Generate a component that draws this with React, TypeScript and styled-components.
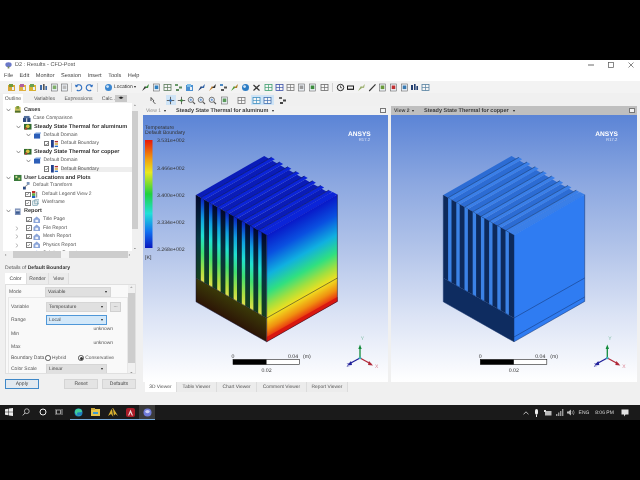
import React from "react";
import styled, { createGlobalStyle } from "styled-components";

const Global = createGlobalStyle`
  html, body { margin: 0; padding: 0; background: #000; }
  body { font-family: "Liberation Sans", Arial, sans-serif; text-rendering: geometricPrecision; }
`;

const Page = styled.div`
  width: 640px; height: 480px; background: #000; overflow: hidden;
  display: flex; flex-direction: column; padding-top: 60px; box-sizing: border-box;
`;
const Soft = styled.div`
  display: flex; flex-direction: column; filter: blur(0.5px);
`;
const Win = styled.div`
  height: 345px; background: #f0f0f0; display: flex; flex-direction: column; color: #3c3c3c;
  font-size: 5.6px; overflow: hidden;
`;
const TitleBar = styled.div`
  height: 10px; background: #fff; display: flex; align-items: center; padding: 0 0 0 5px; gap: 3px; color: #555;
`;
const Spacer = styled.div`flex: 1;`;
const WinControls = styled.div`display: flex; align-items: center; gap: 14px; padding-right: 6px;`;
const MenuBar = styled.div`
  height: 11px; background: #fff; display: flex; align-items: center; padding-left: 4px; gap: 6.6px; color: #444;
`;
const Tool1 = styled.div`
  height: 12px; background: #f3f3f3; display: flex; align-items: center; padding-left: 6px; flex: none;
`;
const ToolSlot = styled.div<{ $w?: number; $hl?: boolean }>`
  width: ${p => p.$w ?? 10.7}px; height: 10px; display: flex; align-items: center; justify-content: center; flex: none;
  background: ${p => (p.$hl ? "#cfe4f6" : "transparent")};
`;
const Sep = styled.div<{ $w: number }>`
  width: ${p => p.$w}px; height: 9px; flex: none; display: flex; justify-content: center;
  &::after { content: ""; width: 1px; height: 100%; background: #d2d2d2; }
`;
const LocationBtn = styled.div`
  width: 36px; display: flex; align-items: center; gap: 1.5px; flex: none; font-size: 5px; color: #333; margin-left: 3px;
`;
const Caret = styled.span`
  width: 0; height: 0; border-left: 1.7px solid transparent; border-right: 1.7px solid transparent;
  border-top: 2.2px solid #222; display: inline-block; flex: none;
`;
const Body = styled.div`flex: 1; display: flex; min-height: 0;`;

const Left = styled.div`
  width: 141px; flex: none; display: flex; flex-direction: column; padding-top: 1px; box-sizing: border-box;
`;
const TabRow = styled.div`
  height: 9px; display: flex; padding-left: 3px; align-items: stretch; position: relative; flex: none;
`;
const TopTab = styled.div<{ $active?: boolean; $w: number }>`
  width: ${p => p.$w}px; display: flex; align-items: center; justify-content: center; flex: none;
  background: ${p => (p.$active ? "#fff" : "transparent")}; font-size: 5.2px; color: #555;
`;
const TabArrows = styled.div`
  position: absolute; left: 115px; top: 1px; width: 12px; height: 7px; background: #c8c8c8;
  font-size: 5px; line-height: 7px; text-align: center; color: #222;
`;
const TreeBox = styled.div`
  margin: 0 3px 0 3px; height: 155px; background: #fff; position: relative; overflow: hidden; flex: none;
  padding-top: 2.8px; box-sizing: border-box;
`;
const Row = styled.div<{ $x: number }>`
  height: 8.45px; display: flex; align-items: center; padding-left: ${p => p.$x}px; white-space: nowrap;
  font-size: 5.1px; color: #505050;
`;
const Label = styled.span<{ $bold?: boolean; $sel?: boolean }>`
  font-weight: ${p => (p.$bold ? 700 : 400)}; color: ${p => (p.$bold ? "#333" : "#555")};
  font-size: ${p => (p.$bold ? 5.55 : 4.95)}px; margin-left: 2.5px;
  flex: ${p => (p.$sel ? 1 : "none")}; background: ${p => (p.$sel ? "#eeeeee" : "transparent")};
`;
const Chev = styled.span`
  width: 11px; height: 8px; display: flex; align-items: center; justify-content: center; flex: none;
`;
const Check = styled.span`
  width: 5.4px; height: 5.4px; border: 0.7px solid #7a7a7a; background: #fff; flex: none; margin-right: 1.4px;
  display: flex; align-items: center; justify-content: center; box-sizing: border-box;
`;
const VScroll = styled.div<{ $top: number; $h: number; $right: number; $thumbH: number; $thumbTop: number }>`
  position: absolute; right: ${p => p.$right}px; top: ${p => p.$top}px; width: 6.5px; height: ${p => p.$h}px;
  background: #f0f0f0; display: flex; flex-direction: column; align-items: center;
  &::before { content: ""; position: absolute; top: ${p => p.$thumbTop}px; left: 0; right: 0; height: ${p => p.$thumbH}px; background: #cdcdcd; }
`;
const HScroll = styled.div`
  position: absolute; left: 0; right: 0; bottom: 0; height: 7px; background: #f0f0f0;
  &::before { content: ""; position: absolute; left: 10px; width: 115px; top: 0; bottom: 0; background: #cdcdcd; }
  &::after { content: ""; position: absolute; left: 58px; width: 8px; top: 0; bottom: 0; background: #f4f4f4; }
`;
const Arrow = styled.span<{ $pos: string }>`
  position: absolute; ${p => p.$pos}; font-size: 4.5px; line-height: 5px; color: #444; z-index: 1;
`;
const DetailsTitle = styled.div`
  height: 12px; padding: 4px 0 0 5px; box-sizing: border-box; font-size: 5.1px; color: #555; flex: none; margin-top: 3px;
  b { color: #333; }
`;
const DetailTabs = styled.div`
  height: 11px; display: flex; padding-left: 5px; align-items: stretch; flex: none; margin-top: 0;
`;
const DTab = styled.div<{ $active?: boolean; $w: number }>`
  width: ${p => p.$w}px; display: flex; align-items: center; justify-content: center;
  background: ${p => (p.$active ? "#fff" : "#ececec")}; border-right: 0.5px solid #dedede; box-sizing: border-box;
  font-size: 5px; color: #444;
`;
const DetailBox = styled.div`
  margin: 0 5px 0 5px; height: 90px; background: #f9f9f9; border: 0.5px solid #e0e0e0; position: relative;
  overflow: hidden; flex: none; box-sizing: border-box;
`;
const ModeRow = styled.div`
  display: flex; align-items: center; height: 10px; margin-top: 2px; padding-left: 3px;
`;
const FieldLabel = styled.span<{ $w: number }>`
  width: ${p => p.$w}px; flex: none; font-size: 5px; color: #555;
`;
const Combo = styled.div<{ $w: number; $focus?: boolean }>`
  width: ${p => p.$w}px; height: 9.5px; box-sizing: border-box; display: flex; align-items: center; justify-content: space-between;
  padding: 0 3px 0 2px; font-size: 4.9px; color: #444; flex: none;
  background: ${p => (p.$focus ? "#d3e8f9" : "#e0e0e0")};
  border: ${p => (p.$focus ? "0.7px solid #4f97d8" : "0.5px solid #d6d6d6")};
`;
const Group = styled.div`
  margin: 0 7px 0 2px; border: 0.5px solid #e8e8e8; padding: 2.5px 0 0 2px; height: 84px; box-sizing: border-box;
  display: flex; flex-direction: column;
`;
const FRow = styled.div<{ $h: number }>`
  height: ${p => p.$h}px; display: flex; align-items: center; flex: none; position: relative;
`;
const MoreBtn = styled.div`
  width: 11px; height: 10px; margin-left: 3px; background: #e3e3e3; border: 0.5px solid #d0d0d0; box-sizing: border-box;
  font-size: 5px; line-height: 7px; text-align: center; color: #444;
`;
const Unknown = styled.span`
  position: absolute; right: 14px; top: 0; font-size: 4.9px; color: #555;
`;
const Radio = styled.span<{ $on?: boolean; $ml: number }>`
  width: 5.6px; height: 5.6px; border: 0.6px solid #555; border-radius: 50%; box-sizing: border-box; margin-left: ${p => p.$ml}px;
  background: #fff; flex: none; display: flex; align-items: center; justify-content: center;
  &::after { content: ""; width: 3px; height: 3px; border-radius: 50%; background: ${p => (p.$on ? "#333" : "transparent")}; }
`;
const RadioText = styled.span`font-size: 4.9px; margin-left: 1.5px; color: #555;`;
const Buttons = styled.div`
  display: flex; padding: 5px 0 0 5px; align-items: center; flex: none;
`;
const Btn = styled.div<{ $primary?: boolean; $ml?: number }>`
  width: 34px; height: 10px; box-sizing: border-box; display: flex; align-items: center; justify-content: center;
  font-size: 5px; color: #444; margin-left: ${p => p.$ml ?? 0}px;
  background: ${p => (p.$primary ? "#e2e9f0" : "#e4e4e4")};
  border: ${p => (p.$primary ? "1px solid #3f88c8" : "0.5px solid #d4d4d4")};
`;

const Right = styled.div`
  flex: 1; display: flex; flex-direction: column; padding-left: 2px; min-width: 0;
`;
const Tool2 = styled.div`
  height: 12px; margin-top: 1px; display: flex; align-items: center; padding-left: 5px; flex: none;
`;
const Views = styled.div`
  display: flex; gap: 3px; height: 276px; flex: none; margin-top: 0; padding-right: 3px;
`;
const View = styled.div<{ $w: number }>`
  width: ${p => p.$w}px; display: flex; flex-direction: column; flex: none;
`;
const ViewHeader = styled.div<{ $active?: boolean }>`
  height: 9px; display: flex; align-items: center; flex: none; padding: 0 2px 0 3px; box-sizing: border-box;
  background: ${p => (p.$active ? "#bfbfbf" : "#f1f1f1")}; color: #444; font-size: 5px; white-space: nowrap;
`;
const ViewName = styled.span<{ $active?: boolean }>`
  width: 18px; flex: none; color: ${p => (p.$active ? "#444" : "#888")}; font-weight: ${p => (p.$active ? 700 : 400)};
`;
const ViewCaret = styled.span`width: 12px; flex: none; display: flex; align-items: center;`;
const ViewTitle = styled.span`font-weight: 700; margin-right: 4px; color: #3d3d3d; font-size: 5.5px;`;
const Maximize = styled.span`
  width: 6px; height: 5px; border: 0.6px solid #777; border-top-width: 1.2px; box-sizing: border-box; background: #f4f4f4;
`;
const Canvas = styled.div`
  height: 267px; flex: none;
  background: linear-gradient(#5b84d6 0%, #8ba7e0 25%, #b5c6ea 52%, #dbe3f5 75%, #ffffff 100%);
  svg { display: block; }
`;
const ViewerTabs = styled.div`
  height: 10px; display: flex; align-items: stretch; padding-left: 2px; flex: none;
`;
const ViewerTab = styled.div<{ $active?: boolean; $w: number }>`
  width: ${p => p.$w}px; display: flex; align-items: center; justify-content: center; font-size: 4.9px; color: #555; flex: none;
  background: ${p => (p.$active ? "#fff" : "#ececec")}; border-right: 0.5px solid #dcdcdc; box-sizing: border-box;
`;

const Taskbar = styled.div`
  height: 15px; background: #1a1a1a; display: flex; align-items: center; color: #d8d8d8; font-size: 5px;
`;
const TaskSlot = styled.div<{ $w: number; $active?: boolean; $under?: boolean }>`
  width: ${p => p.$w}px; height: 15px; display: flex; align-items: center; justify-content: center; flex: none; box-sizing: border-box;
  background: ${p => (p.$active ? "#3a3a3a" : "transparent")};
  border-bottom: ${p => (p.$under ? "1px solid #76a9d8" : "1px solid transparent")};
`;
const Tray = styled.div`display: flex; align-items: center; gap: 0; padding-right: 8px; height: 15px;`;
const TrayItem = styled.div<{ $w: number }>`
  width: ${p => p.$w}px; display: flex; align-items: center; justify-content: center; flex: none; white-space: nowrap;
`;

type IconKind = "box" | "disc" | "bars" | "undo" | "redo" | "grid" | "cross" | "hand" | "zoom" | "page" | "fan" | "clock" | "wire" | "line" | "tree" | "move";

const ToolIcon = ({ k, a = "#3b78c4", b = "#e6b33c" }: { k: IconKind; a?: string; b?: string }) => {
  const s = { width: 9, height: 9, viewBox: "0 0 9 9" };
  switch (k) {
    case "box":
      return <svg {...s}><rect x="1" y="2" width="7" height="6" fill={a} /><rect x="2" y="1" width="4" height="3" fill={b} /><rect x="5" y="4" width="2" height="3" fill="#e8eef6" /></svg>;
    case "disc":
      return <svg {...s}><circle cx="4.5" cy="4.5" r="3.5" fill={a} /><circle cx="3.6" cy="3.6" r="1.4" fill="#cfe4f7" /></svg>;
    case "bars":
      return <svg {...s}><rect x="1" y="2" width="2" height="5" fill={a} /><rect x="4" y="1" width="1.6" height="6" fill={b} /><rect x="6.4" y="3" width="1.6" height="4" fill={a} /></svg>;
    case "undo":
      return <svg {...s} fill="none"><path d="M2 3.5 A3 3 0 1 1 2.8 7" stroke={a} strokeWidth="1.1" /><path d="M0.8 1.5 L2 4.4 L4.2 3 Z" fill={a} /></svg>;
    case "redo":
      return <svg {...s} fill="none"><path d="M7 3.5 A3 3 0 1 0 6.2 7" stroke={a} strokeWidth="1.1" /><path d="M8.2 1.5 L7 4.4 L4.8 3 Z" fill={a} /></svg>;
    case "grid":
      return <svg {...s} fill="none"><rect x="1" y="1.5" width="7" height="6" fill="#f6f6f6" stroke={a} strokeWidth=".8" /><path d="M1 4.5H8M4.5 1.5V7.5" stroke={a} strokeWidth=".7" /></svg>;
    case "cross":
      return <svg {...s} fill="none"><path d="M1.5 2 L7.5 7.5 M7.5 2 L1.5 7.5" stroke="#333" strokeWidth="1.2" /><circle cx="4.5" cy="4.7" r="1" fill={a} /></svg>;
    case "hand":
      return <svg {...s} fill="none"><path d="M2 1.5 L5 5 L4 5.5 L6.5 8 M2 1.5 L2 5" stroke="#333" strokeWidth=".8" /></svg>;
    case "move":
      return <svg {...s} fill="none"><path d="M4.5 .8V8.2M.8 4.5H8.2" stroke="#555" strokeWidth=".9" /><circle cx="4.5" cy="4.5" r="1.2" fill={a} /></svg>;
    case "zoom":
      return <svg {...s} fill="none"><circle cx="3.8" cy="3.8" r="2.6" stroke="#555" strokeWidth=".8" fill="#eef3f8" /><path d="M5.8 5.8 L8 8" stroke="#555" strokeWidth="1.1" /><path d="M2.6 3.8H5M3.8 2.6V5" stroke={a} strokeWidth=".6" /></svg>;
    case "page":
      return <svg {...s}><rect x="1.5" y="1" width="6" height="7" fill="#eef3f8" stroke="#666" strokeWidth=".6" /><rect x="2.7" y="2.5" width="3.6" height="3.6" fill={a} /></svg>;
    case "fan":
      return <svg {...s}><path d="M1 8 L4 3 L5.5 4.5 Z" fill={a} /><path d="M4 5 L8 1 L7 5 Z" fill={b} /></svg>;
    case "clock":
      return <svg {...s} fill="none"><circle cx="4.5" cy="4.5" r="3.2" stroke="#222" strokeWidth="1" /><path d="M4.5 2.5V4.7H6" stroke="#222" strokeWidth=".7" /></svg>;
    case "wire":
      return <svg {...s}><rect x="1" y="2.5" width="7" height="4.4" fill="#1c1c1c" /><rect x="2" y="3.5" width="5" height="2.2" fill="#f3f3f3" /></svg>;
    case "line":
      return <svg {...s} fill="none"><path d="M1.2 8 L7.5 1.4" stroke="#333" strokeWidth="1.1" /></svg>;
    case "tree":
      return <svg {...s}><rect x="1" y="1" width="3" height="2" fill={b} /><rect x="5" y="3.5" width="3" height="2" fill={a} /><rect x="2" y="6" width="3" height="2" fill={a} /></svg>;
  }
};

type TI = [IconKind, string?, string?];
const toolStart: TI[] = [["box", "#d9a637", "#6f9a3a"], ["box", "#e0b040", "#b060a0"], ["box", "#d8b030", "#6aa050"], ["bars", "#3c6aa8", "#555"], ["page", "#7fae6a"], ["page", "#bbb"]];
const toolUndo: TI[] = [["undo", "#2f6fc0"], ["redo", "#2f6fc0"]];
const toolMid: TI[] = [
  ["fan", "#333", "#3a8a3a"], ["page", "#2f80c0"], ["grid", "#5a7a5a"], ["tree", "#5c8a5c", "#6a9a6a"], ["box", "#4a8fd0", "#7fbde8"], ["fan", "#203c70", "#3366aa"], ["fan", "#c08030", "#333"],
  ["tree", "#555", "#4d8ac4"], ["fan", "#4a9a3a", "#b0802a"], ["disc", "#2c7cc4"], ["cross", "#444"], ["grid", "#3f9f6f"], ["grid", "#3a50a8"], ["grid", "#777"], ["page", "#999"], ["page", "#3c8c3c"],
];
const toolEnd: TI[] = [["clock"], ["wire"], ["fan", "#8fa860", "#a8b880"], ["line"], ["page", "#6a9a3a"], ["page", "#c03030"], ["page", "#3a7ab0"], ["bars", "#233f70", "#233f70"], ["grid", "#5580a0"]];

const tool2: Array<{ k?: IconKind; a?: string; b?: string; w: number; hl?: boolean }> = [
  { k: "hand", a: "#333", w: 10 },
  { w: 7.6 },
  { k: "move", a: "#2f6fc0", w: 10.7, hl: true },
  { k: "move", a: "#3a8a3a", w: 10 },
  { k: "zoom", a: "#2f6fc0", w: 10.4 },
  { k: "zoom", a: "#2f6fc0", w: 10.4 },
  { k: "zoom", a: "#2f6fc0", w: 10.4 },
  { k: "page", a: "#5a9a5a", w: 14 },
  { k: "grid", a: "#777", w: 20 },
  { k: "grid", a: "#3f8fc0", w: 10, hl: true },
  { k: "grid", a: "#3f6fb0", w: 13, hl: true },
  { k: "tree", a: "#444", b: "#666", w: 17 },
];

const sinkPts = (arr: number[][]) => arr.map(p => p.join(",")).join(" ");
const HeatSink = ({ id, copper }: { id: string; copper?: boolean }) => {
  const dx = 8.2, dy = 4.686, bx = 70.7, by = -40.4;
  const cells = Array.from({ length: 9 }, (_, i) => i);
  const lineC = copper ? "#12306a" : "#101030";
  const topFin = copper ? "#3a7fe8" : "#0b24d8";
  const topGap = copper ? "#2c6cd4" : "#0a1cb8";
  const seam = copper ? "#16407f" : "#050f60";
  return (
    <>
      <defs>
        <linearGradient id={`${id}r`} gradientUnits="userSpaceOnUse" x1="266.7" y1="235" x2="311.9" y2="314.1">
          <stop offset="0" stopColor="#0818c8" /><stop offset=".19" stopColor="#0a50e0" /><stop offset=".38" stopColor="#10b0e0" />
          <stop offset=".55" stopColor="#30e080" /><stop offset=".68" stopColor="#a0e040" /><stop offset=".79" stopColor="#f0e020" />
          <stop offset=".9" stopColor="#f09010" /><stop offset="1" stopColor="#e82010" />
        </linearGradient>
        <linearGradient id={`${id}s`} gradientUnits="userSpaceOnUse" x1="196" y1="195" x2="159.8" y2="258.3">
          <stop offset="0" stopColor="#0a20c0" /><stop offset=".24" stopColor="#10a0e0" /><stop offset=".44" stopColor="#20e0d0" />
          <stop offset=".65" stopColor="#40e070" /><stop offset=".87" stopColor="#b0e040" /><stop offset="1" stopColor="#e8e050" />
        </linearGradient>
        <linearGradient id={`${id}d`} gradientUnits="userSpaceOnUse" x1="196" y1="195" x2="159.8" y2="258.3">
          <stop offset="0" stopColor="#02082c" /><stop offset=".5" stopColor="#053440" /><stop offset="1" stopColor="#15401c" />
        </linearGradient>
        <linearGradient id={`${id}b`} gradientUnits="userSpaceOnUse" x1="196" y1="278" x2="185.7" y2="296.1">
          <stop offset="0" stopColor="#3a3a08" /><stop offset="1" stopColor="#2c1406" />
        </linearGradient>
      </defs>
      {cells.map(i => {
        const x = 196 + dx * i, y = 195 + dy * i;
        const g0 = [x, y], g1 = [x + 4.8, y + 2.74];
        const f1 = [x + 8.2, y + 4.686];
        const back = (p: number[], t = 1) => [p[0] + bx * t, p[1] + by * t];
        return (
          <g key={`t${i}`}>
            <polygon points={sinkPts([g0, g1, back(g1, 0.965), back(g0, 0.965)])} fill={topGap} />
            {i < 8 && <polygon points={sinkPts([g1, f1, back(f1), back(g1)])} fill={topFin} />}
            {i < 8 && <path d={`M${g1[0]} ${g1[1]} L${back(g1)[0]} ${back(g1)[1]}`} stroke={seam} strokeWidth=".7" />}
          </g>
        );
      })}
      <polygon points="261.9,232.3 266.7,235 337.4,194.6 332.6,191.9" fill={topFin} />
      <polygon points="196,195 266.7,235 266.7,318 196,278" fill={copper ? "#0d2a5c" : `url(#${id}d)`} />
      <polygon points="196,278 266.7,318 266.7,341.8 196,301.8" fill={copper ? "#0e2c60" : `url(#${id}b)`} />
      {cells.slice(0, 8).map(i => {
        const x = 196 + dx * i + 4.8, y = 195 + dy * i + 2.74;
        return <polygon key={`s${i}`} points={sinkPts([[x, y], [x + 3.4, y + 1.95], [x + 3.4, y + 84.95], [x, y + 83]])} fill={copper ? "#3b82e6" : `url(#${id}s)`} />;
      })}
      <polygon points="266.7,235 337.4,194.6 337.4,301.4 266.7,341.8" fill={copper ? "#2f7cf2" : `url(#${id}r)`} />
      {!copper && <polygon points="266.7,337 337.4,297 337.4,301.4 266.7,341.8" fill="#d81810" />}
      <path d="M196 278 L266.7 318 L337.4 278" stroke={lineC} strokeWidth=".5" fill="none" />
      {copper && <path d="M266.7 337 L337.4 297" stroke={lineC} strokeWidth=".5" fill="none" />}
      <path d="M266.7 235 V341.8 M196 195 V301.8 L266.7 341.8 L337.4 301.4 V194.6" stroke={lineC} strokeWidth=".5" fill="none" />
    </>
  );
};

const SvgText = styled.text<{ $c?: string; $s?: number; $b?: boolean }>`
  font-family: "Liberation Sans", Arial, sans-serif; font-size: ${p => p.$s ?? 5}px; fill: ${p => p.$c ?? "#333"};
  font-weight: ${p => (p.$b ? 700 : 400)};
`;

const Overlays = () => (
  <>
    <SvgText x="348" y="136" $s={6.6} $b $c="#fff">ANSYS</SvgText>
    <SvgText x="370" y="141" $s={4.2} $c="#dfe7f8" textAnchor="end">R17.2</SvgText>
    <SvgText x="233" y="357.5" $s={5.2} textAnchor="middle">0</SvgText>
    <SvgText x="293" y="357.5" $s={5.2} textAnchor="middle">0.04</SvgText>
    <SvgText x="303" y="357.5" $s={5.2}>(m)</SvgText>
    <SvgText x="266.5" y="371.5" $s={5.2} textAnchor="middle">0.02</SvgText>
    <rect x="233" y="359.5" width="66.5" height="5" fill="#fff" stroke="#222" strokeWidth=".6" />
    <rect x="233" y="359.5" width="33.5" height="5" fill="#000" />
    <path d="M360 358 V347" stroke="#128a3a" strokeWidth="1.3" />
    <path d="M358.3 349 L360 344.5 L361.7 349 Z" fill="#128a3a" />
    <path d="M360 358 L371 364" stroke="#b02838" strokeWidth="1.3" />
    <path d="M369 361 L373 365.5 L368 365 Z" fill="#b02838" />
    <path d="M360 358 L349 364" stroke="#20209a" strokeWidth="1.3" />
    <path d="M351 361 L347 365.5 L352 365 Z" fill="#20209a" />
    <circle cx="360" cy="358" r="1.3" fill="#38b0b8" />
    <SvgText x="362.5" y="340" $s={5} $c="#7ab8a0" textAnchor="middle">Y</SvgText>
    <SvgText x="375" y="367.5" $s={5} $c="#d88090">X</SvgText>
    <SvgText x="346.5" y="367" $s={5} $c="#5050b0">Z</SvgText>
  </>
);

const Legend = () => (
  <>
    <defs>
      <linearGradient id="lg" x1="0" y1="0" x2="0" y2="1">
        <stop offset="0" stopColor="#e81808" /><stop offset=".18" stopColor="#f0a010" /><stop offset=".3" stopColor="#e8e820" />
        <stop offset=".5" stopColor="#20d040" /><stop offset=".68" stopColor="#20e0d8" /><stop offset=".85" stopColor="#1070f0" /><stop offset="1" stopColor="#0818c0" />
      </linearGradient>
    </defs>
    <SvgText x="145" y="129" $s={5.2}>Temperature</SvgText>
    <SvgText x="145" y="134" $s={5.2}>Default Boundary</SvgText>
    <rect x="145" y="140" width="7.5" height="108" fill="url(#lg)" />
    {[["3.531e+002", 142], ["3.466e+002", 169.5], ["3.400e+002", 197], ["3.334e+002", 224], ["3.268e+002", 251]].map(([t, y]) => (
      <SvgText key={t as string} x="157" y={y as number} $s={5.2}>{t}</SvgText>
    ))}
    <SvgText x="145" y="259" $s={5.2}>[K]</SvgText>
  </>
);

const ChevronD = () => <svg width="5" height="4" viewBox="0 0 5 4"><path d="M.6 .8 L2.5 3 L4.4 .8" fill="none" stroke="#666" strokeWidth=".7" /></svg>;
const ChevronR = () => <svg width="4" height="5" viewBox="0 0 4 5"><path d="M.8 .6 L3 2.5 L.8 4.4" fill="none" stroke="#999" strokeWidth=".7" /></svg>;
const Tick = () => <svg width="4" height="4" viewBox="0 0 4 4"><path d="M.6 2 L1.6 3.2 L3.4 .7" fill="none" stroke="#555" strokeWidth=".7" /></svg>;

type TK = "cases" | "study" | "compare" | "domain" | "boundary" | "transform" | "legend" | "wire" | "report" | "doc" | "loc";
const TreeIcon = ({ k }: { k: TK }) => {
  const s = { width: 7.5, height: 7.5, viewBox: "0 0 8 8", style: { flex: "none" as const } };
  switch (k) {
    case "cases": return <svg {...s}><rect x="1" y="1" width="6" height="6" fill="#c8c060" /><rect x="2.5" y="0" width="3" height="3" fill="#7c9a3a" /><rect x="1" y="5" width="6" height="2" fill="#50702c" /></svg>;
    case "study": return <svg {...s}><rect x="0" y="1" width="8" height="6" fill="#2e6a2e" /><circle cx="4" cy="3.5" r="2" fill="#d8c040" /><rect x="1" y="5" width="2.5" height="2" fill="#b04030" /></svg>;
    case "loc": return <svg {...s}><rect x="0" y="1" width="8" height="6.5" fill="#3a7a3a" /><rect x="1.5" y="2" width="2" height="2" fill="#d8e0a0" /><rect x="4.5" y="4" width="2" height="2" fill="#c8d070" /></svg>;
    case "compare": return <svg {...s}><rect x="0" y="3" width="3.5" height="4.5" fill="#2c4a80" /><rect x="4.5" y="3" width="3.5" height="4.5" fill="#2c4a80" /><rect x="1" y="1" width="6" height="2.5" fill="#53709e" /></svg>;
    case "domain": return <svg {...s}><rect x="0" y="2" width="6.5" height="5" fill="#2d5fb8" /><path d="M0 2 L2 .6 H8 L6.5 2 Z" fill="#78a0dc" /></svg>;
    case "boundary": return <svg {...s}><rect x="0" y="0" width="3" height="8" fill="#22408c" /><rect x="4" y="1" width="4" height="1.5" fill="#b03030" /><rect x="4" y="3.5" width="4" height="1.5" fill="#d0a030" /><rect x="4" y="6" width="4" height="1.5" fill="#3070c0" /></svg>;
    case "transform": return <svg {...s}><rect x="4" y="0" width="3" height="3" fill="#7a94b8" /><rect x="0" y="5" width="3" height="3" fill="#2c4a80" /><path d="M2 5 L5 3" stroke="#555" strokeWidth=".7" /></svg>;
    case "legend": return <svg {...s}><rect x="0" y="0" width="3.5" height="2.6" fill="#c03028" /><rect x="0" y="2.6" width="3.5" height="2.6" fill="#60b040" /><rect x="0" y="5.2" width="3.5" height="2.8" fill="#2060c0" /><path d="M5 1V7" stroke="#555" strokeWidth=".8" /></svg>;
    case "wire": return <svg {...s}><rect x=".8" y="2" width="5" height="5" fill="#e8eef0" stroke="#5f8f9f" strokeWidth=".6" /><rect x="3" y=".8" width="4.4" height="4.4" fill="none" stroke="#5f8f9f" strokeWidth=".6" /></svg>;
    case "report": return <svg {...s}><rect x="1" y="0.5" width="6" height="7" fill="#7c90b8" /><rect x="2" y="2" width="4" height="1" fill="#e0e6f0" /><rect x="2" y="4" width="4" height="2" fill="#3c5c90" /></svg>;
    case "doc": return <svg {...s}><path d="M4 .5 L7.5 3.5 V7.5 H.5 V3.5 Z" fill="#8aa4d8" /><rect x="2.5" y="4" width="3" height="2.5" fill="#eef2fa" /></svg>;
  }
};

type RowDef = { x: number; chev?: "d" | "r"; check?: boolean; icon?: TK; text: string; bold?: boolean; sel?: boolean };
const rows: RowDef[] = [
  { x: 0, chev: "d", icon: "cases", text: "Cases", bold: true },
  { x: 20, icon: "compare", text: "Case Comparison" },
  { x: 10, chev: "d", icon: "study", text: "Steady State Thermal for aluminum", bold: true },
  { x: 19.5, chev: "d", icon: "domain", text: "Default Domain" },
  { x: 41, check: true, icon: "boundary", text: "Default Boundary" },
  { x: 10, chev: "d", icon: "study", text: "Steady State Thermal for copper", bold: true },
  { x: 19.5, chev: "d", icon: "domain", text: "Default Domain" },
  { x: 41, check: true, icon: "boundary", text: "Default Boundary", sel: true },
  { x: 0, chev: "d", icon: "loc", text: "User Locations and Plots", bold: true },
  { x: 20, icon: "transform", text: "Default Transform" },
  { x: 22.2, check: true, icon: "legend", text: "Default Legend View 2" },
  { x: 22.2, check: true, icon: "wire", text: "Wireframe" },
  { x: 0, chev: "d", icon: "report", text: "Report", bold: true },
  { x: 23.2, check: true, icon: "doc", text: "Title Page" },
  { x: 8.5, chev: "r", check: true, icon: "doc", text: "File Report" },
  { x: 8.5, chev: "r", check: true, icon: "doc", text: "Mesh Report" },
  { x: 8.5, chev: "r", check: true, icon: "doc", text: "Physics Report" },
  { x: 8.5, chev: "r", check: true, icon: "doc", text: "Solution Report" },
];

const Fold = styled.span`display: inline-flex; width: 3.7px; flex: none;`;

export default function App() {
  return (
    <Page>
      <Global />
      <Soft>
        <Win>
          <TitleBar>
            <svg width="7" height="7" viewBox="0 0 8 8"><ellipse cx="4" cy="3" rx="3.6" ry="2.6" fill="#6a78c8" /><rect x="3" y="5" width="2" height="2.4" fill="#7a8a5a" /></svg>
            <span>D2 : Results - CFD-Post</span>
            <Spacer />
            <WinControls>
              <svg width="6" height="6" viewBox="0 0 6 6"><path d="M0 3H6" stroke="#444" strokeWidth=".8" /></svg>
              <svg width="6" height="6" viewBox="0 0 6 6"><rect x=".5" y=".5" width="5" height="5" fill="none" stroke="#555" strokeWidth=".7" /></svg>
              <svg width="6" height="6" viewBox="0 0 6 6"><path d="M.5 .5L5.5 5.5M5.5 .5L.5 5.5" stroke="#555" strokeWidth=".7" /></svg>
            </WinControls>
          </TitleBar>
          <MenuBar>
            {["File", "Edit", "Monitor", "Session", "Insert", "Tools", "Help"].map(m => <span key={m}>{m}</span>)}
          </MenuBar>
          <Tool1>
            {toolStart.map((t, i) => <ToolSlot key={i}><ToolIcon k={t[0]} a={t[1]} b={t[2]} /></ToolSlot>)}
            <Sep $w={3} />
            {toolUndo.map((t, i) => <ToolSlot key={i}><ToolIcon k={t[0]} a={t[1]} b={t[2]} /></ToolSlot>)}
            <Sep $w={6} />
            <LocationBtn><ToolIcon k="disc" a="#3a86d0" /><span>Location</span><Caret /></LocationBtn>
            {toolMid.map((t, i) => <ToolSlot key={i} $w={11.2}><ToolIcon k={t[0]} a={t[1]} b={t[2]} /></ToolSlot>)}
            <ToolSlot $w={11.2}><ToolIcon k="grid" a="#6a6a6a" /></ToolSlot>
            <Sep $w={5} />
            {toolEnd.map((t, i) => <ToolSlot key={i}><ToolIcon k={t[0]} a={t[1]} b={t[2]} /></ToolSlot>)}
          </Tool1>
          <Body>
            <Left>
              <TabRow>
                <TopTab $active $w={20}>Outline</TopTab>
                <TopTab $w={11} />
                <TopTab $w={21}>Variables</TopTab>
                <TopTab $w={10} />
                <TopTab $w={27}>Expressions</TopTab>
                <TopTab $w={11} />
                <TopTab $w={12}>Calc...</TopTab>
                <TabArrows>◂▸</TabArrows>
              </TabRow>
              <TreeBox>
                {rows.map((r, i) => (
                  <Row key={i} $x={r.x}>
                    {r.chev === "d" && <Chev><ChevronD /></Chev>}
                    {r.chev === "r" && <Chev><ChevronR /></Chev>}
                    {r.chev === "r" && <Fold />}
                    {r.check && <Check><Tick /></Check>}
                    {r.icon && <TreeIcon k={r.icon} />}
                    <Label $bold={r.bold} $sel={r.sel}>{r.text}</Label>
                  </Row>
                ))}
                <VScroll $right={0} $top={0} $h={148} $thumbTop={8} $thumbH={118}>
                  <Arrow $pos="top: 1px; left: 1.5px">⌃</Arrow>
                  <Arrow $pos="bottom: 1px; left: 1.5px">⌄</Arrow>
                </VScroll>
                <HScroll>
                  <Arrow $pos="left: 2px; top: 1px">‹</Arrow>
                  <Arrow $pos="right: 8px; top: 1px">›</Arrow>
                </HScroll>
              </TreeBox>
              <DetailsTitle>Details of <b>Default Boundary</b></DetailsTitle>
              <DetailTabs>
                <DTab $active $w={22}>Color</DTab>
                <DTab $w={22}>Render</DTab>
                <DTab $w={20}>View</DTab>
              </DetailTabs>
              <DetailBox>
                <ModeRow>
                  <FieldLabel $w={36}>Mode</FieldLabel>
                  <Combo $w={66}>Variable<Caret /></Combo>
                </ModeRow>
                <Group>
                  <FRow $h={13}>
                    <FieldLabel $w={35}>Variable</FieldLabel>
                    <Combo $w={61}>Temperature<Caret /></Combo>
                    <MoreBtn>...</MoreBtn>
                  </FRow>
                  <FRow $h={13}>
                    <FieldLabel $w={35}>Range</FieldLabel>
                    <Combo $w={61} $focus>Local<Caret /></Combo>
                  </FRow>
                  <FRow $h={14}>
                    <FieldLabel $w={35}>Min</FieldLabel>
                    <Unknown>unknown</Unknown>
                  </FRow>
                  <FRow $h={12}>
                    <FieldLabel $w={35}>Max</FieldLabel>
                    <Unknown>unknown</Unknown>
                  </FRow>
                  <FRow $h={11}>
                    <FieldLabel $w={34}>Boundary Data</FieldLabel>
                    <Radio $ml={0} />
                    <RadioText>Hybrid</RadioText>
                    <Radio $on $ml={12} />
                    <RadioText>Conservative</RadioText>
                  </FRow>
                  <FRow $h={11}>
                    <FieldLabel $w={35}>Color Scale</FieldLabel>
                    <Combo $w={61}>Linear<Caret /></Combo>
                  </FRow>
                </Group>
                <VScroll $right={0.5} $top={0} $h={90} $thumbTop={8} $thumbH={70}>
                  <Arrow $pos="top: 1px; left: 1.5px">⌃</Arrow>
                  <Arrow $pos="bottom: 1px; left: 1.5px">⌄</Arrow>
                </VScroll>
              </DetailBox>
              <Buttons>
                <Btn $primary>Apply</Btn>
                <Btn $ml={25}>Reset</Btn>
                <Btn $ml={4}>Defaults</Btn>
              </Buttons>
            </Left>
            <Right>
              <Tool2>
                {tool2.map((t, i) => (
                  <ToolSlot key={i} $w={t.w} $hl={t.hl}>{t.k && <ToolIcon k={t.k} a={t.a} b={t.b} />}</ToolSlot>
                ))}
              </Tool2>
              <Views>
                <View $w={245}>
                  <ViewHeader>
                    <ViewName>View 1</ViewName>
                    <ViewCaret><Caret /></ViewCaret>
                    <ViewTitle>Steady State Thermal for aluminum</ViewTitle>
                    <Caret />
                    <Spacer />
                    <Maximize />
                  </ViewHeader>
                  <Canvas>
                    <svg width="245" height="267" viewBox="143 115 245 267">
                      <HeatSink id="al" />
                      <Legend />
                      <Overlays />
                    </svg>
                  </Canvas>
                </View>
                <View $w={246}>
                  <ViewHeader $active>
                    <ViewName $active>View 2</ViewName>
                    <ViewCaret><Caret /></ViewCaret>
                    <ViewTitle>Steady State Thermal for copper</ViewTitle>
                    <Caret />
                    <Spacer />
                    <Maximize />
                  </ViewHeader>
                  <Canvas>
                    <svg width="246" height="267" viewBox="143.7 115 246 267">
                      <HeatSink id="cu" copper />
                      <Overlays />
                    </svg>
                  </Canvas>
                </View>
              </Views>
              <ViewerTabs>
                <ViewerTab $active $w={32}>3D Viewer</ViewerTab>
                <ViewerTab $w={40}>Table Viewer</ViewerTab>
                <ViewerTab $w={40}>Chart Viewer</ViewerTab>
                <ViewerTab $w={50}>Comment Viewer</ViewerTab>
                <ViewerTab $w={41}>Report Viewer</ViewerTab>
              </ViewerTabs>
            </Right>
          </Body>
        </Win>
        <Taskbar>
          <TaskSlot $w={18}>
            <svg width="8" height="8" viewBox="0 0 8 8" fill="#eee"><path d="M0 1.2 L3.5 .7 V3.7 H0Z M4 .6 L8 0 V3.7 H4Z M0 4.2 H3.5 V7.3 L0 6.8Z M4 4.2 H8 V8 L4 7.4Z" /></svg>
          </TaskSlot>
          <TaskSlot $w={16}>
            <svg width="8" height="8" viewBox="0 0 8 8" fill="none"><circle cx="4.8" cy="3.2" r="2.4" stroke="#ccc" strokeWidth=".8" /><path d="M3 5 L.8 7.4" stroke="#ccc" strokeWidth=".9" /></svg>
          </TaskSlot>
          <TaskSlot $w={17}>
            <svg width="8" height="8" viewBox="0 0 8 8" fill="none"><circle cx="4" cy="4" r="3" stroke="#eee" strokeWidth="1" /></svg>
          </TaskSlot>
          <TaskSlot $w={16}>
            <svg width="8" height="8" viewBox="0 0 8 8" fill="none"><rect x="1.5" y="2" width="4" height="4" stroke="#bbb" strokeWidth=".8" /><path d="M7 1V7M0 1V7" stroke="#bbb" strokeWidth=".8" /></svg>
          </TaskSlot>
          <TaskSlot $w={3} />
          <TaskSlot $w={17} $under>
            <svg width="9" height="9" viewBox="0 0 9 9"><circle cx="4.5" cy="4.5" r="4" fill="#1f7fc0" /><path d="M1 4.5 A3.5 3.5 0 0 1 8 4 L3.5 4.5 A2 2 0 0 0 7 7 A4 4 0 0 1 1 4.5Z" fill="#3fcf9a" /></svg>
          </TaskSlot>
          <TaskSlot $w={17} $under>
            <svg width="9" height="8" viewBox="0 0 9 8"><rect x="0" y="1" width="9" height="7" fill="#e6c34a" /><rect x="0" y="0" width="4" height="2" fill="#c9a63a" /><rect x="2" y="4" width="5" height="2" fill="#3d9ad0" /></svg>
          </TaskSlot>
          <TaskSlot $w={17} $under>
            <svg width="10" height="9" viewBox="0 0 10 9"><path d="M0 8 L3 2 L5 0 L7 3 L10 8 L7.5 6 L5 8.5 L3 6Z" fill="#d8b030" /><path d="M4.5 1 L5.5 8" stroke="#222" strokeWidth="1" /></svg>
          </TaskSlot>
          <TaskSlot $w={18} $under>
            <svg width="9" height="9" viewBox="0 0 9 9"><rect x="0" y="0" width="9" height="9" rx="2" fill="#a81c28" /><path d="M4.5 1.5 L7 7.5 H5.8 L4.5 4.5 L3.2 7.5 H2Z" fill="#f0e0e0" /></svg>
          </TaskSlot>
          <TaskSlot $w={16} $active $under>
            <svg width="9" height="9" viewBox="0 0 9 9"><circle cx="4.5" cy="4.5" r="4" fill="#6f7bd8" /><ellipse cx="4.5" cy="3.6" rx="2.2" ry="1.6" fill="#cdd2f4" /></svg>
          </TaskSlot>
          <Spacer />
          <Tray>
            <TrayItem $w={11}><svg width="6" height="4" viewBox="0 0 6 4"><path d="M.5 3.4L3 .8L5.5 3.4" fill="none" stroke="#ddd" strokeWidth=".8" /></svg></TrayItem>
            <TrayItem $w={11}><svg width="5" height="8" viewBox="0 0 5 8"><rect x="1" y="0" width="3" height="5.5" rx="1.5" fill="#eee" /><rect x="2" y="5.5" width="1" height="2.5" fill="#eee" /></svg></TrayItem>
            <TrayItem $w={12}><svg width="8" height="6" viewBox="0 0 8 6"><rect x="1" y="1" width="6.5" height="4.5" fill="#bbb" /><rect x="0" y="0" width="2" height="2" fill="#ddd" /></svg></TrayItem>
            <TrayItem $w={11}><svg width="8" height="7" viewBox="0 0 8 7" fill="#999"><rect x="0" y="5" width="1.4" height="2" /><rect x="2" y="3.5" width="1.4" height="3.5" /><rect x="4" y="2" width="1.4" height="5" /><rect x="6" y="0" width="1.4" height="7" /></svg></TrayItem>
            <TrayItem $w={12}><svg width="8" height="7" viewBox="0 0 8 7" fill="none"><path d="M0 2.5H1.5L4 .5V6.5L1.5 4.5H0Z" fill="#bbb" /><path d="M5 2 Q6 3.5 5 5 M6.3 1 Q8 3.5 6.3 6" stroke="#bbb" strokeWidth=".6" /></svg></TrayItem>
            <TrayItem $w={14}>ENG</TrayItem>
            <TrayItem $w={27}>8:06 PM</TrayItem>
            <TrayItem $w={14}><svg width="8" height="8" viewBox="0 0 8 8"><path d="M.5 .5H7.5V5.5H4.5L3 7.5V5.5H.5Z" fill="#e4e4e4" /></svg></TrayItem>
          </Tray>
        </Taskbar>
      </Soft>
    </Page>
  );
}
